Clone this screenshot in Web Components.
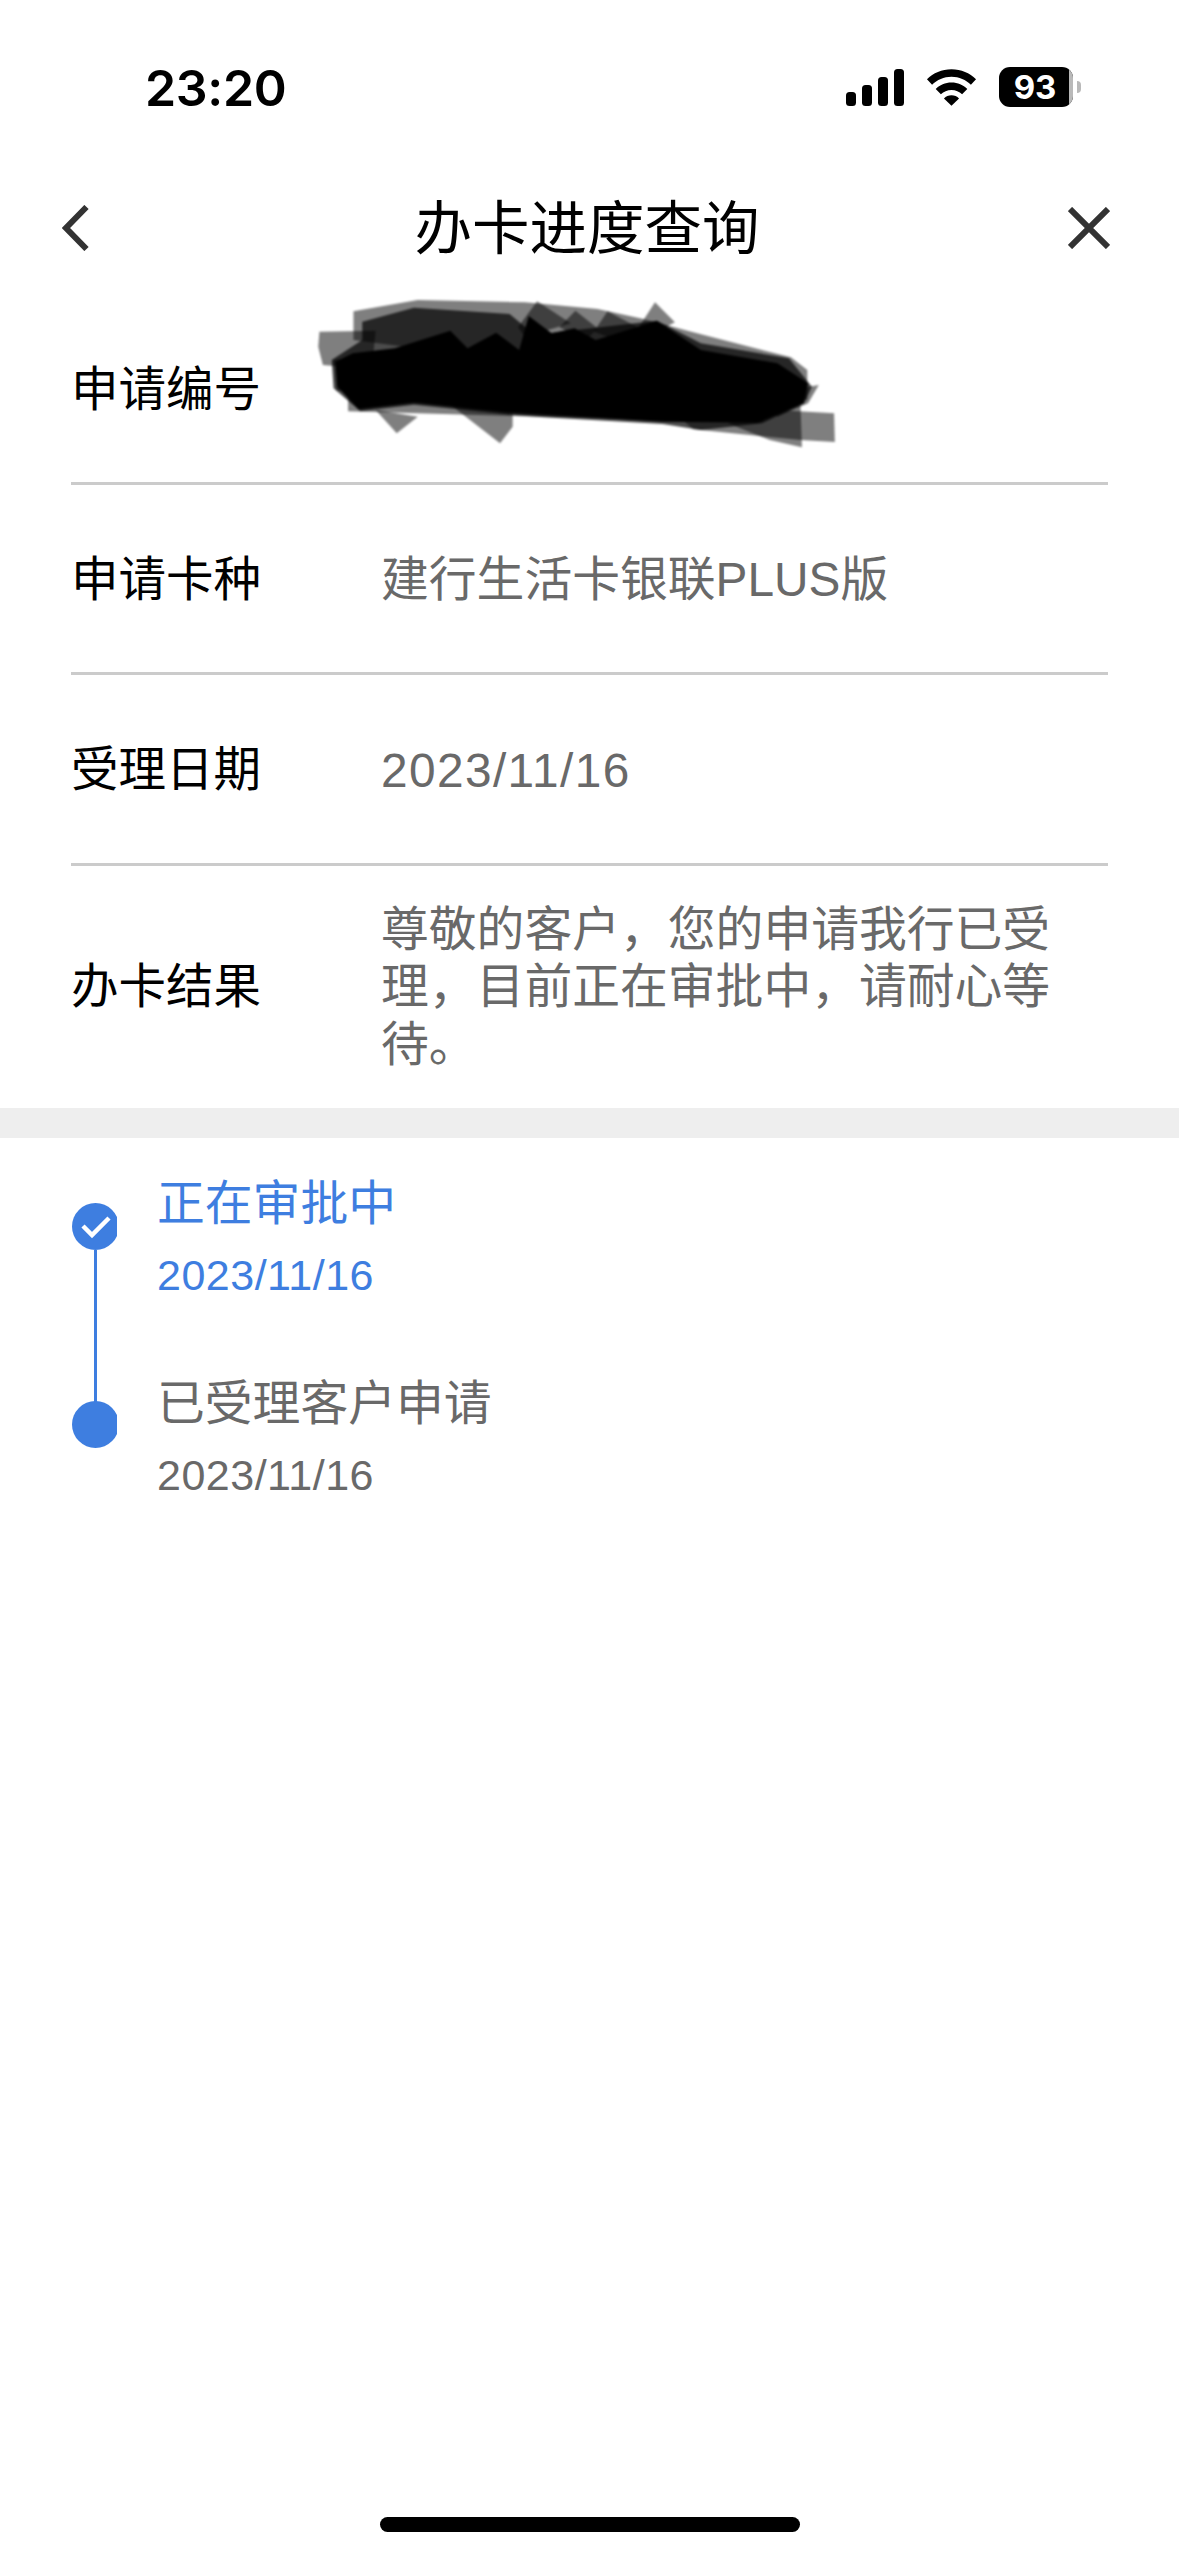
<!DOCTYPE html>
<html lang="zh"><head><meta charset="utf-8">
<style>
html,body{margin:0;padding:0;background:#fff}
body{width:1179px;height:2556px;overflow:hidden;position:relative;font-family:"Liberation Sans","Noto Sans CJK SC",sans-serif}
</style></head><body>
<app-screen>
<status-bar></status-bar>
<nav-bar>办卡进度查询</nav-bar>
<info-list>
<info-row label="申请编号" redacted h="199"></info-row>
<info-row label="申请卡种" h="190">建行生活卡银联PLUS版</info-row>
<info-row label="受理日期" h="191" spaced>2023/11/16</info-row>
<info-row label="办卡结果" h="242" tall>尊敬的客户，您的申请我行已受理，目前正在审批中，请耐心等待。</info-row>
</info-list>
<section-gap></section-gap>
<time-line>
<time-step state="current" title="正在审批中" date="2023/11/16"></time-step>
<time-step state="done" title="已受理客户申请" date="2023/11/16" last></time-step>
</time-line>
<home-bar></home-bar>
</app-screen>
<script>
function def(name,html){
  customElements.define(name,class extends HTMLElement{
    constructor(){super();this.attachShadow({mode:'open'});}
    connectedCallback(){this.shadowRoot.innerHTML=typeof html==='function'?html(this):html;}
  });
}
def('app-screen',`<style>:host{display:flex;flex-direction:column;width:1179px;height:2556px;color:#000;font-family:"Liberation Sans","Noto Sans CJK SC",sans-serif}</style><slot></slot>`);
def('status-bar',`<style>
:host{display:flex;box-sizing:border-box;height:170px;padding:60px 98px 0 145px;justify-content:space-between;align-items:flex-start;flex:none}
.t{font:600 50px/55px "Inter","Liberation Sans",sans-serif;letter-spacing:-.3px;color:#000;margin-top:1px}
.i{display:flex;align-items:center;height:40px;margin-top:7px}
svg{display:block}
.bat{position:relative;width:74px;height:40px;background:#000;border-radius:11px;margin-left:22px;display:flex;align-items:center;justify-content:center;color:#fff;font:700 33px/40px "Inter","Liberation Sans",sans-serif;box-sizing:border-box;padding-right:2px;overflow:hidden}
.lvl{position:absolute;right:0;top:0;bottom:0;width:4px;background:#b9b9b9}
.cap{width:4px;height:12px;background:#b9b9b9;border-radius:0 7px 7px 0;margin-left:4px}
</style>
<div class="t">23:20</div>
<div class="i">
<svg width="58" height="37" viewBox="0 0 58 37"><rect x="0" y="23" width="10" height="14" rx="3.5"/><rect x="16" y="16" width="10" height="21" rx="3.5"/><rect x="32" y="8" width="10" height="29" rx="3.5"/><rect x="48" y="0" width="10" height="37" rx="3.5"/></svg>
<svg style="margin-left:22px" width="51" height="37" viewBox="0 0 52 37"><path d="M26 0C16 0 7.500 3.800 1 10.200l5.200 5.600C11.300 10.700 18.200 7.600 26 7.600s14.700 3.100 19.800 8.200l5.200-5.600C44.500 3.800 36 0 26 0z"/><path d="M26 13.500c-6.400 0-12 2.500-16.100 6.500l5.300 5.500c2.800-2.700 6.600-4.400 10.800-4.400s8 1.700 10.800 4.400l5.300-5.500C38 16 32.400 13.500 26 13.500z"/><path d="M26 26.500c-3 0-5.700 1.200-7.700 3.100L26 37l7.700-7.400c-2-1.900-4.700-3.100-7.700-3.100z"/></svg>
<div style="display:flex;align-items:center"><div class="bat">93<div class="lvl"></div></div><div class="cap"></div></div>
</div>`);
def('nav-bar',`<style>
:host{display:grid;grid-template-columns:1fr auto 1fr;box-sizing:border-box;height:116px;padding:0 69px 0 62px;align-items:center;flex:none}
.title{font-size:57.500px;line-height:116px;font-weight:400;color:#000;font-family:"Noto Sans CJK SC",sans-serif;margin-top:-8px;margin-left:2px}
svg{display:block;fill:none;stroke:#333;stroke-width:6}
.x{justify-self:end}
</style>
<svg width="28" height="46" viewBox="0 0 28 46"><path d="M24.500 2 4 23l20.500 21"/></svg>
<div class="title"><slot></slot></div>
<svg class="x" width="42" height="42" viewBox="0 0 42 42"><path d="M2 2 40 40M40 2 2 40"/></svg>`);
def('info-list',`<style>:host{display:block;flex:none;height:822px}</style><slot></slot>`);
const red=`<svg class="red" width="600" height="200" viewBox="0 0 1568 600" preserveAspectRatio="none">
<g fill="#000" fill-opacity=".5">
<path d="M103 185 250 182 240 298 112 285 100 230z"/>
<path d="M192 124 360 90 640 97 830 117 950 147 1080 187 1335 262 1378 300 1378 390 192 210z"/>
<path d="M140 270 200 262 210 360 148 362z"/>
<path d="M178 360 1000 450 178 424z"/>
<path d="M250 420 360 440 305 490z"/>
<path d="M440 400 608 420 608 470 575 520z"/>
<path d="M1000 400 1448 430 1450 516 1360 510 1080 478z"/>
<path d="M1170 460 1360 400 1364 532 1280 510z"/>
<path d="M1240 380 1408 345 1380 400 1300 440z"/>
<path d="M672 94 760 160 640 200 622 172z"/>
<path d="M772 122 830 175 800 210 730 172z"/>
<path d="M856 124 940 175 880 210 820 185z"/>
<path d="M980 97 1032 157 960 200 940 167z"/>
</g>
<g fill="#000" fill-opacity=".7">
<path d="M215 155 350 113 600 132 640 170 700 190 985 152 1100 220 1330 265 1390 350 1370 400 1260 460 1100 480 1000 462 690 442 620 436 350 404 210 424 140 355 135 270 215 210z"/>
</g>
<g fill="#000">
<path d="M190 250 300 235 445 182 490 235 565 188 625 240 650 138 710 190 770 175 825 210 985 152 1100 240 1300 280 1380 340 1368 400 1250 458 1000 455 620 430 350 398 205 418 150 350 145 275z"/>
</g>
</svg>`;
def('info-row',h=>{
 const tall=h.hasAttribute('tall'),r=h.hasAttribute('redacted'),sp=h.hasAttribute('spaced');
 return `<style>
:host{display:flex;align-items:center;box-sizing:border-box;margin:0 71px;height:${h.getAttribute('h')}px;${tall?'':'border-bottom:3px solid #cbcbcb;'}${r?'padding-top:10px;':''}position:relative;flex:none}
.l{flex:none;width:310px;font-size:47.500px;color:#000;font-family:"Noto Sans CJK SC",sans-serif;line-height:58px;padding-bottom:${tall?8:6}px}
.v{flex:1;font-size:47.800px;line-height:${tall?57.500:58}px;color:#696969;letter-spacing:${sp?'1.4px':'0'};font-family:"Liberation Sans","Noto Sans CJK SC",sans-serif;padding:${tall?0:3}px 45px 0 0}
.red{position:absolute;left:209px;top:-16px;filter:blur(1px)}
</style><div class="l">${h.getAttribute('label')}</div><div class="v"><slot></slot></div>${r?red:''}`});
def('section-gap',`<style>:host{display:block;height:30px;background:#eee;flex:none}</style>`);
def('time-line',`<style>:host{display:flex;flex-direction:column;flex:none;padding:32px 0 0 72px}</style><slot></slot>`);
def('time-step',h=>{
 const cur=h.getAttribute('state')==='current',last=h.hasAttribute('last');
 const c=cur?'#3e7ee0':'#696969';
 return `<style>
:host{display:flex;box-sizing:border-box;height:200px;position:relative;padding-top:3px;flex:none}
.rail{flex:none;width:45px;margin-right:41px;margin-top:-3px;position:relative}
.dot{position:absolute;left:0;top:${cur?33:31}px;width:47px;height:47px;border-radius:50%;background:#3e7ee0;display:flex;align-items:center;justify-content:center;clip-path:inset(0 2px 0 0)}
.line{position:absolute;left:22px;top:80px;width:3px;height:152px;background:#3e7ee0}
.tx{margin-left:-1px}
.ti{font-size:47.800px;line-height:62px;color:${c};font-family:"Liberation Sans","Noto Sans CJK SC",sans-serif}
.d{font-size:43px;line-height:50px;margin-top:15px;color:${c};letter-spacing:.5px}
</style>
<div class="rail">${last?'':'<div class="line"></div>'}<div class="dot">${cur?'<svg width="34" height="24" viewBox="0 0 34 24"><path d="M4 11 13 20 30 3" fill="none" stroke="#fff" stroke-width="4.500"/></svg>':''}</div></div>
<div class="tx"><div class="ti">${h.getAttribute('title')}</div><div class="d">${h.getAttribute('date')}</div></div>`});
def('home-bar',`<style>:host{display:flex;justify-content:center;margin-top:auto;padding-bottom:24px;flex:none}
div{width:420px;height:15px;border-radius:7.500px;background:#000}</style><div></div>`);
</script>
</body></html>
